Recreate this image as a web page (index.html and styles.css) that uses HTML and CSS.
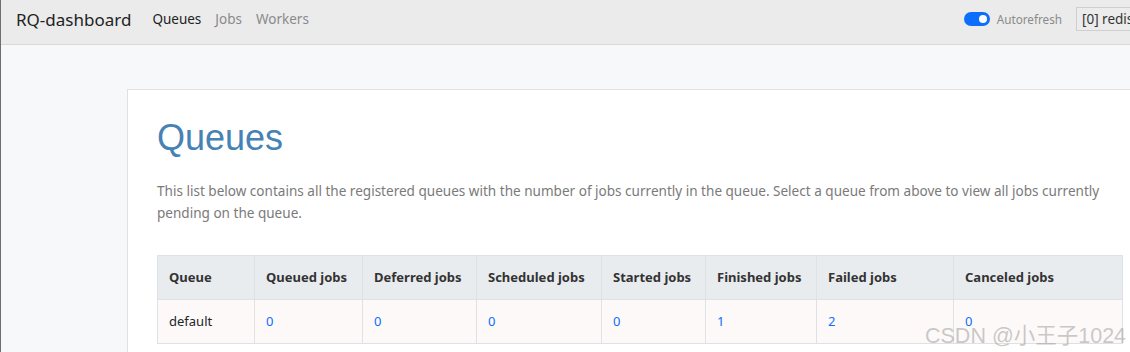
FILE: index.html
```html
<!DOCTYPE html>
<html>
<head>
    <title>RQ-dashboard</title>
    <link rel="stylesheet" href="styles.css">
</head>
<body>
    <nav class="navbar">
        <a class="brand" href="#">RQ-dashboard</a>
        <ul class="nav-links">
            <li><a class="active" href="#">Queues</a></li>
            <li><a href="#">Jobs</a></li>
            <li><a href="#">Workers</a></li>
        </ul>
        <div class="nav-right">
            <label class="switch">
                <span class="track"><span class="knob"></span></span>
                <span class="switch-label">Autorefresh</span>
            </label>
            <div class="instance">[0] redis://localhost:6379</div>
        </div>
    </nav>

    <main class="container">
        <section class="card">
            <h1>Queues</h1>
            <p class="lead">This list below contains all the registered queues with the number of jobs currently in the queue. Select a queue from above to view all jobs currently pending on the queue.</p>

            <table class="queues">
                <thead>
                    <tr>
                        <th class="c1">Queue</th>
                        <th class="c2">Queued jobs</th>
                        <th class="c3">Deferred jobs</th>
                        <th class="c4">Scheduled jobs</th>
                        <th class="c5">Started jobs</th>
                        <th class="c6">Finished jobs</th>
                        <th class="c7">Failed jobs</th>
                        <th class="c8">Canceled jobs</th>
                    </tr>
                </thead>
                <tbody>
                    <tr>
                        <td>default</td>
                        <td><a href="#">0</a></td>
                        <td><a href="#">0</a></td>
                        <td><a href="#">0</a></td>
                        <td><a href="#">0</a></td>
                        <td><a href="#">1</a></td>
                        <td><a href="#">2</a></td>
                        <td><a href="#">0</a></td>
                    </tr>
                </tbody>
            </table>
        </section>
    </main>

    <div class="watermark">CSDN @小王子1024</div>
</body>
</html>
```

FILE: styles.css
```css
body {
    margin: 0;
    font-family: "Noto Sans", "Open Sans", sans-serif;
    background: #f7f8fa;
    border-left: 1px solid #6e6e6e;
    height: 352px;
    overflow: hidden;
    color: #212529;
}
a {
    text-decoration: none;
}
.navbar {
    box-sizing: border-box;
    display: flex;
    align-items: center;
    height: 45px;
    padding: 0 0 6px 15px;
    background: #ebebeb;
    border-bottom: 1px solid #d9d9d9;
    white-space: nowrap;
}
.brand {
    font-size: 17px;
    color: #222;
    margin-right: 21px;
}
.nav-links {
    display: flex;
    gap: 14px;
    list-style: none;
    margin: 0;
    padding: 0;
    font-size: 13.5px;
}
.nav-links a {
    color: #8a8a8a;
}
.nav-links a.active {
    color: #222;
}
.nav-right {
    margin-left: auto;
    display: flex;
    align-items: center;
    gap: 14px;
    margin-right: -208px;
}
.switch {
    display: flex;
    align-items: center;
    gap: 7px;
    font-size: 11.7px;
    color: #8a8a8a;
}
.track {
    width: 26px;
    height: 14px;
    border-radius: 7px;
    background: #0d6efd;
    position: relative;
}
.knob {
    position: absolute;
    right: 3px;
    top: 3px;
    width: 8px;
    height: 8px;
    border-radius: 50%;
    background: #fff;
}
.instance {
    border: 1px solid #cfcfcf;
    padding: 2px 5px;
    font-size: 13.5px;
    color: #333;
    background: #ececec;
    width: 250px;
}
.container {
    padding: 44px 0 0 126px;
}
.card {
    width: 965px;
    background: #fff;
    border: 1px solid #dee2e6;
    padding: 26px 30px 20px 29px;
}
h1 {
    margin: 0 0 21px;
    font-family: "Liberation Sans", Arial, sans-serif;
    font-weight: normal;
    font-size: 36px;
    line-height: 43px;
    color: #4682b4;
}
.lead {
    margin: 0 0 31px;
    font-size: 13.55px;
    line-height: 22px;
    color: #7a7a7a;
}
.queues {
    border-collapse: collapse;
    width: 966px;
    table-layout: fixed;
}
.queues th,
.queues td {
    box-sizing: border-box;
    border: 1px solid #dee2e6;
    padding: 11px 6px 11px 11px;
    text-align: left;
    line-height: 21px;
    white-space: nowrap;
}
.queues th {
    background: #e9ecef;
    color: #333;
    font-weight: bold;
    font-size: 13px;
}
.queues td {
    background: #fdf9f8;
    font-size: 13px;
}
.queues td a {
    color: #0d6efd;
}
.c1 { width: 97px; }
.c2 { width: 108px; }
.c3 { width: 114px; }
.c4 { width: 125px; }
.c5 { width: 104px; }
.c6 { width: 111px; }
.c7 { width: 137px; }
.c8 { width: 169px; }
.watermark {
    position: absolute;
    left: 925px;
    top: 318px;
    font-family: "Liberation Sans", "Noto Sans CJK SC", sans-serif;
    font-size: 21.5px;
    color: rgba(150, 150, 150, 0.5);
    white-space: nowrap;
}
```
